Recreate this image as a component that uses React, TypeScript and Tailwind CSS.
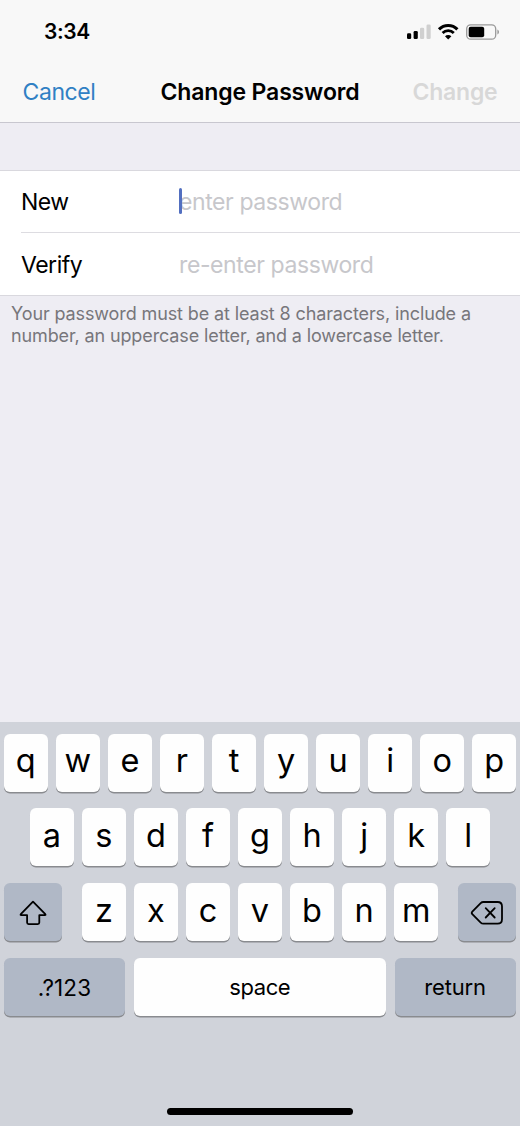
import type { ReactNode } from "react";

function Label({ children, className = "" }: { children: ReactNode; className?: string }) {
  return <span className={`block whitespace-nowrap ${className}`}>{children}</span>;
}

function StatusBar() {
  return (
    <div className="flex h-[62px] items-start justify-between pl-[44px] pr-[20px]">
      <Label className="pt-[18px] text-[21px] leading-[28px] font-semibold tracking-[-0.4px]">3:34</Label>
      <svg className="mt-[22px]" width="94" height="20" viewBox="0 0 94 20" fill="none">
        <rect x="1" y="11.3" width="4.2" height="5.8" rx="1.3" fill="#000" />
        <rect x="7.6" y="9" width="4.2" height="8.1" rx="1.3" fill="#000" />
        <rect x="14" y="5.7" width="4.2" height="11.4" rx="1.3" fill="#d0d0d0" />
        <rect x="20.5" y="2.5" width="4.2" height="14.6" rx="1.3" fill="#d0d0d0" />
        <path d="M33 7.3a13 13 0 0 1 18.4 0" stroke="#000" strokeWidth="3.1" />
        <path d="M36.6 11a7.9 7.9 0 0 1 11.2 0" stroke="#000" strokeWidth="2.8" />
        <path d="M39 14.2a4.6 4.6 0 0 1 6.4 0l-3.2 3.2z" fill="#000" />
        <rect x="60.7" y="2.8" width="29" height="14.4" rx="4" stroke="#999" strokeWidth="1.3" />
        <rect x="62.7" y="4.8" width="15.5" height="10.4" rx="2" fill="#000" />
        <path d="M91.4 7.5c2.1.8 2.1 4.2 0 5z" fill="#999" />
      </svg>
    </div>
  );
}

function NavBar() {
  return (
    <div className="grid h-[60px] grid-cols-[1fr_auto_1fr] items-center px-[22.5px] text-[23px] leading-[30px]">
      <Label className="tracking-[-0.4px] text-[#3080c4]">Cancel</Label>
      <Label className="font-semibold tracking-[-0.15px]">Change Password</Label>
      <Label className="justify-self-end font-semibold tracking-[-0.2px] text-[#d8d8d8]">Change</Label>
    </div>
  );
}

function Field({ label, placeholder, focused = false }: { label: string; placeholder: string; focused?: boolean }) {
  return (
    <div className="flex h-[62px] items-center text-[23px] leading-[30px]">
      <Label className="w-[158px] tracking-[-0.5px]">{label}</Label>
      <div className="relative">
        <Label className="tracking-[-0.4px] text-[#c7c7cb]">{placeholder}</Label>
        {focused && <span className="absolute top-[1px] left-0 h-[26px] w-[3px] rounded-full bg-[#526fc0]" />}
      </div>
    </div>
  );
}

const keyBase = "flex h-[58px] items-center justify-center rounded-[6px] shadow-[0_1.4px_0_#898b8f]";

function LetterKey({ letter }: { letter: string }) {
  return (
    <div className={`${keyBase} w-[43.5px] bg-[#fefefe] text-[32.5px] leading-[40px] font-normal`}>
      <Label className="-mt-[3px]">{letter}</Label>
    </div>
  );
}

function LetterRow({ letters }: { letters: string }) {
  return (
    <div className="flex justify-center gap-[8.55px]">
      {letters.split("").map((letter) => (
        <LetterKey key={letter} letter={letter} />
      ))}
    </div>
  );
}

function Keyboard() {
  return (
    <div className="flex h-[404px] flex-col bg-[#d0d3da] pt-[11.6px]">
      <div className="flex flex-col gap-[16.9px] px-[4px]">
        <LetterRow letters="qwertyuiop" />
        <LetterRow letters="asdfghjkl" />
        <div className="flex justify-between">
          <div className={`${keyBase} w-[58px] bg-[#b0b8c6]`}>
            <svg className="mt-[2px]" width="30" height="28" viewBox="0 0 30 28" fill="none" stroke="#000" strokeWidth="1.8" strokeLinejoin="round">
              <path d="M15 2.7 27.3 15.2q.8 1-.5 1H21.3v7.4q0 1.5-1.5 1.5H10.6q-1.5 0-1.5-1.5v-7.4H3.3q-1.3 0-.5-1z" />
            </svg>
          </div>
          <LetterRow letters="zxcvbnm" />
          <div className={`${keyBase} w-[58px] bg-[#b0b8c6]`}>
            <svg className="mt-[1px]" width="34" height="26" viewBox="0 0 34 26" fill="none" stroke="#000" strokeWidth="1.8" strokeLinejoin="round" strokeLinecap="round">
              <path d="M13.4 2h14.2q4.4 0 4.4 4.4v12.9q0 4.4-4.4 4.4H13.4q-1.6 0-2.7-1.1L2.3 14.1q-1.2-1.2 0-2.4l8.4-8.6Q11.8 2 13.4 2z" />
              <path d="m15.7 8.2 9 9.3M24.7 8.2l-9 9.3" />
            </svg>
          </div>
        </div>
        <div className="flex gap-[8.5px] text-[22px] leading-[30px]">
          <div className={`${keyBase} w-[121px] bg-[#b0b8c6]`}>
            <Label className="mt-[2px] text-[22.5px] tracking-[0.1px]">.?123</Label>
          </div>
          <div className={`${keyBase} w-[252.5px] bg-[#fefefe]`}>
            <Label className="tracking-[-0.4px]">space</Label>
          </div>
          <div className={`${keyBase} w-[121px] bg-[#b0b8c6]`}>
            <Label className="tracking-[-0.2px]">return</Label>
          </div>
        </div>
      </div>
      <div className="mx-auto mt-auto mb-[11px] h-[7px] w-[186px] rounded-full bg-black" />
    </div>
  );
}

export default function App() {
  return (
    <div className="flex h-[1126px] w-[520px] flex-col overflow-hidden bg-[#eeedf3] font-['Inter','Liberation_Sans',sans-serif] text-black">
      <header className="h-[123px] border-b border-[#c8c7cf] bg-[#f8f8f8]">
        <StatusBar />
        <NavBar />
      </header>
      <main className="flex-1 pt-[47px]">
        <div className="h-[126px] border-y border-[#d9d8de] bg-white pl-[21px]">
          <div className="-mb-px">
            <Field label="New" placeholder="enter password" focused />
          </div>
          <div className="mb-px h-px bg-[#dddce1]" />
          <Field label="Verify" placeholder="re-enter password" />
        </div>
        <div className="pt-[7px] pl-[11px] text-[18px] leading-[22px] text-[#77767b]">
          <Label className="tracking-[-0.12px]">Your password must be at least 8 characters, include a</Label>
          <Label className="tracking-[-0.12px]">number, an uppercase letter, and a lowercase letter.</Label>
        </div>
      </main>
      <Keyboard />
    </div>
  );
}
